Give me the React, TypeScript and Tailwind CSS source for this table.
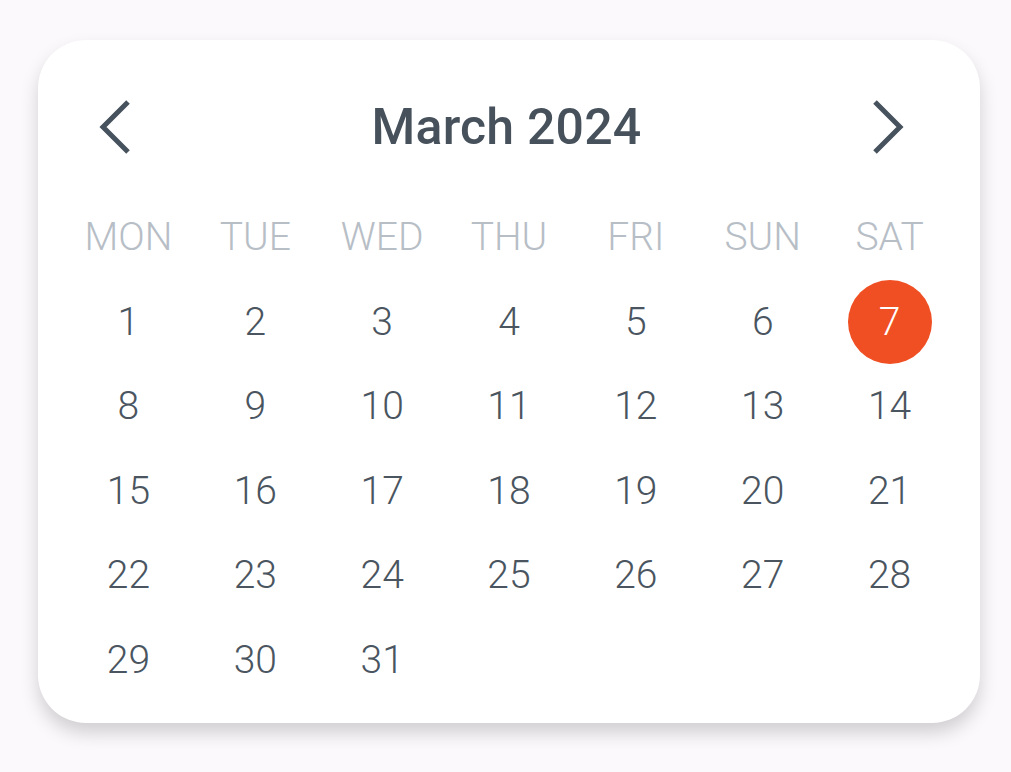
const days = ["MON", "TUE", "WED", "THU", "FRI", "SUN", "SAT"];

function Chevron({ dir }: { dir: "left" | "right" }) {
  return (
    <svg width="36" height="56" viewBox="0 0 36 56" fill="none">
      <path
        d={dir === "left" ? "M30 3 L5 28 L30 53" : "M6 3 L31 28 L6 53"}
        stroke="#46525e"
        strokeWidth="5"
      />
    </svg>
  );
}

export default function App() {
  const cells: number[] = [];
  for (let i = 1; i <= 31; i++) cells.push(i);

  return (
    <div
      className="min-h-screen bg-[#fcf9fc] pt-[40px] pl-[38px]"
      style={{ fontFamily: "Roboto, sans-serif" }}
    >
      <div className="w-[942px] h-[683px] rounded-[48px] bg-white shadow-[0_10px_18px_rgba(0,0,0,0.17)] px-[27px] pt-[32px]">
        <div className="h-[110px] flex items-center justify-between pl-[33px] pr-[48px]">
          <Chevron dir="left" />
          <h1 className="text-[50px] font-medium text-[#46515c] tracking-[0.2px] ml-[10px]">March 2024</h1>
          <Chevron dir="right" />
        </div>
        <div className="mt-[13px] grid grid-cols-7 auto-rows-[84.5px]">
          {days.map((d) => (
            <div
              key={d}
              className="flex items-center justify-center text-[39px] font-light text-[#b7bec6]"
            >
              {d}
            </div>
          ))}
          {cells.map((n) => (
            <div key={n} className="flex items-center justify-center">
              {n === 7 ? (
                <span className="w-[84px] h-[84px] rounded-full bg-[#f04f23] text-white flex items-center justify-center text-[39px] font-light">
                  7
                </span>
              ) : (
                <span className="text-[39px] font-light text-[#4a555f]">{n}</span>
              )}
            </div>
          ))}
        </div>
      </div>
    </div>
  );
}
